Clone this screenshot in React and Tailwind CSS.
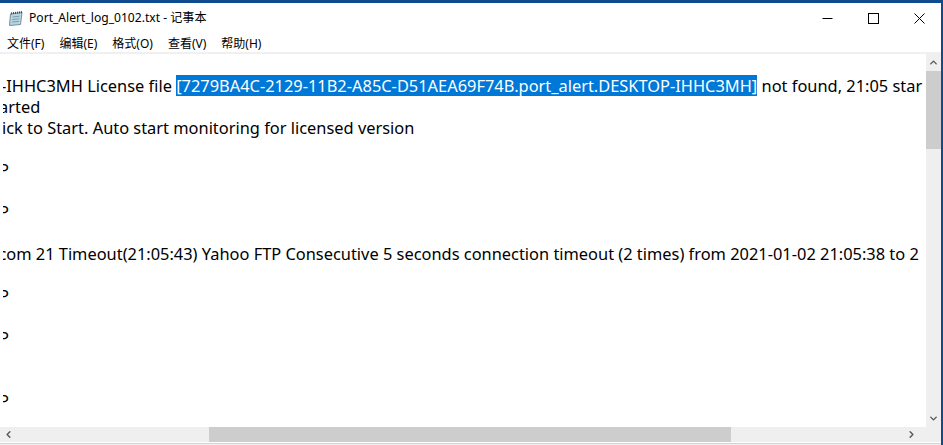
import { ChevronUp, ChevronDown, ChevronLeft, ChevronRight } from 'lucide-react'

const MENUS = ['文件(F)', '编辑(E)', '格式(O)', '查看(V)', '帮助(H)']

function NotepadIcon() {
  return (
    <svg width="16" height="17" viewBox="0 0 16 17" className="shrink-0">
      <path d="M2.5 4 L14 2.5 L12.5 14.5 L1.5 15.5 Z" fill="#b5d6e2" stroke="#76909c" strokeWidth="1" />
      <path d="M3 3.5 L14 2" stroke="#444" strokeWidth="2" strokeDasharray="1 1" />
      <path d="M4.5 7 L11.5 6.2 M4.3 9.5 L11.2 8.8 M4 12 L11 11.4" stroke="#7f9dab" strokeWidth="1" />
    </svg>
  )
}

function WindowButtons() {
  return (
    <div className="ml-auto -mr-px flex items-center">
      <div className="w-[46px] flex justify-center">
        <svg width="11" height="11" viewBox="0 0 11 11"><path d="M0.5 5.5 H10.5" stroke="#000" strokeWidth="1" /></svg>
      </div>
      <div className="w-[46px] flex justify-center">
        <svg width="11" height="11" viewBox="0 0 11 11"><rect x="0.5" y="0.5" width="10" height="10" fill="none" stroke="#000" strokeWidth="1" /></svg>
      </div>
      <div className="w-[46px] flex justify-center">
        <svg width="11" height="11" viewBox="0 0 11 11"><path d="M0.5 0.5 L10.5 10.5 M10.5 0.5 L0.5 10.5" stroke="#000" strokeWidth="1" /></svg>
      </div>
    </div>
  )
}

function TextRow({ offset, children }) {
  return <div className={`h-[21px] leading-[21px] whitespace-pre ${offset}`}>{children}</div>
}

export default function App() {
  return (
    <div className="w-[943px] h-[445px] bg-white border-t-[3px] border-r-2 border-[#0f4c8f] overflow-hidden flex flex-col font-['Noto_Sans','Noto_Sans_CJK_SC',sans-serif] text-black">
      <div className="h-[30px] shrink-0 flex items-center pl-2 pt-[1px]">
        <NotepadIcon />
        <span className="ml-[5px] text-[12.1px]">Port_Alert_log_0102.txt - 记事本</span>
        <WindowButtons />
      </div>

      <div className="h-[19px] shrink-0 flex items-center pl-[7px] gap-[15px] text-[12px] pt-[2px]">
        {MENUS.map(m => <span key={m}>{m}</span>)}
      </div>

      <div className="h-[2px] shrink-0 bg-[#f0f0f0]" />

      <div className="flex-1 flex min-h-0">
        <div className="flex-1 min-w-0 overflow-hidden ml-[3px] pt-[21px] text-[16.4px]">
          <TextRow offset="-ml-[2px]">
            -IHHC3MH License file <span className="inline-block h-[21px] bg-[#0078d7] text-white">[7279BA4C-2129-11B2-A85C-D51AEA69F74B.port_alert.DESKTOP-IHHC3MH]</span> not found, 21:05 star
          </TextRow>
          <TextRow offset="-ml-[4px]">arted</TextRow>
          <TextRow offset="-ml-[1px]">ick to Start. Auto start monitoring for licensed version</TextRow>
          <TextRow offset="" />
          <TextRow offset="-ml-[4px]">P</TextRow>
          <TextRow offset="" />
          <TextRow offset="-ml-[4px]">P</TextRow>
          <TextRow offset="" />
          <TextRow offset="-ml-[9px]">.com 21 Timeout(21:05:43) Yahoo FTP Consecutive 5 seconds connection timeout (2 times) from 2021-01-02 21:05:38 to 2</TextRow>
          <TextRow offset="" />
          <TextRow offset="-ml-[4px]">P</TextRow>
          <TextRow offset="" />
          <TextRow offset="-ml-[4px]">P</TextRow>
          <TextRow offset="" />
          <TextRow offset="" />
          <TextRow offset="-ml-[4px]">P</TextRow>
        </div>
        <div className="w-[15px] shrink-0 bg-[#efefef] flex flex-col items-center text-[#555]">
          <div className="h-[17px] flex items-center"><ChevronUp size={11} strokeWidth={3} /></div>
          <div className="w-full h-[78px] bg-[#cdcdcd]" />
          <div className="mt-auto h-[17px] flex items-center"><ChevronDown size={11} strokeWidth={3} /></div>
        </div>
      </div>

      <div className="h-[15px] shrink-0 bg-[#efefef] flex items-center text-[#555]">
        <div className="w-[17px] flex justify-center"><ChevronLeft size={11} strokeWidth={3} /></div>
        <div className="ml-[192px] w-[522px] h-full bg-[#cdcdcd]" />
        <div className="ml-[172px] w-[17px] flex justify-center"><ChevronRight size={11} strokeWidth={3} /></div>
      </div>
      <div className="h-[1px] shrink-0 bg-white" />
      <div className="h-[1px] shrink-0 bg-[#d4d4d4]" />
      <div className="h-[1px] shrink-0 bg-[#f0f0f0]" />
    </div>
  )
}
